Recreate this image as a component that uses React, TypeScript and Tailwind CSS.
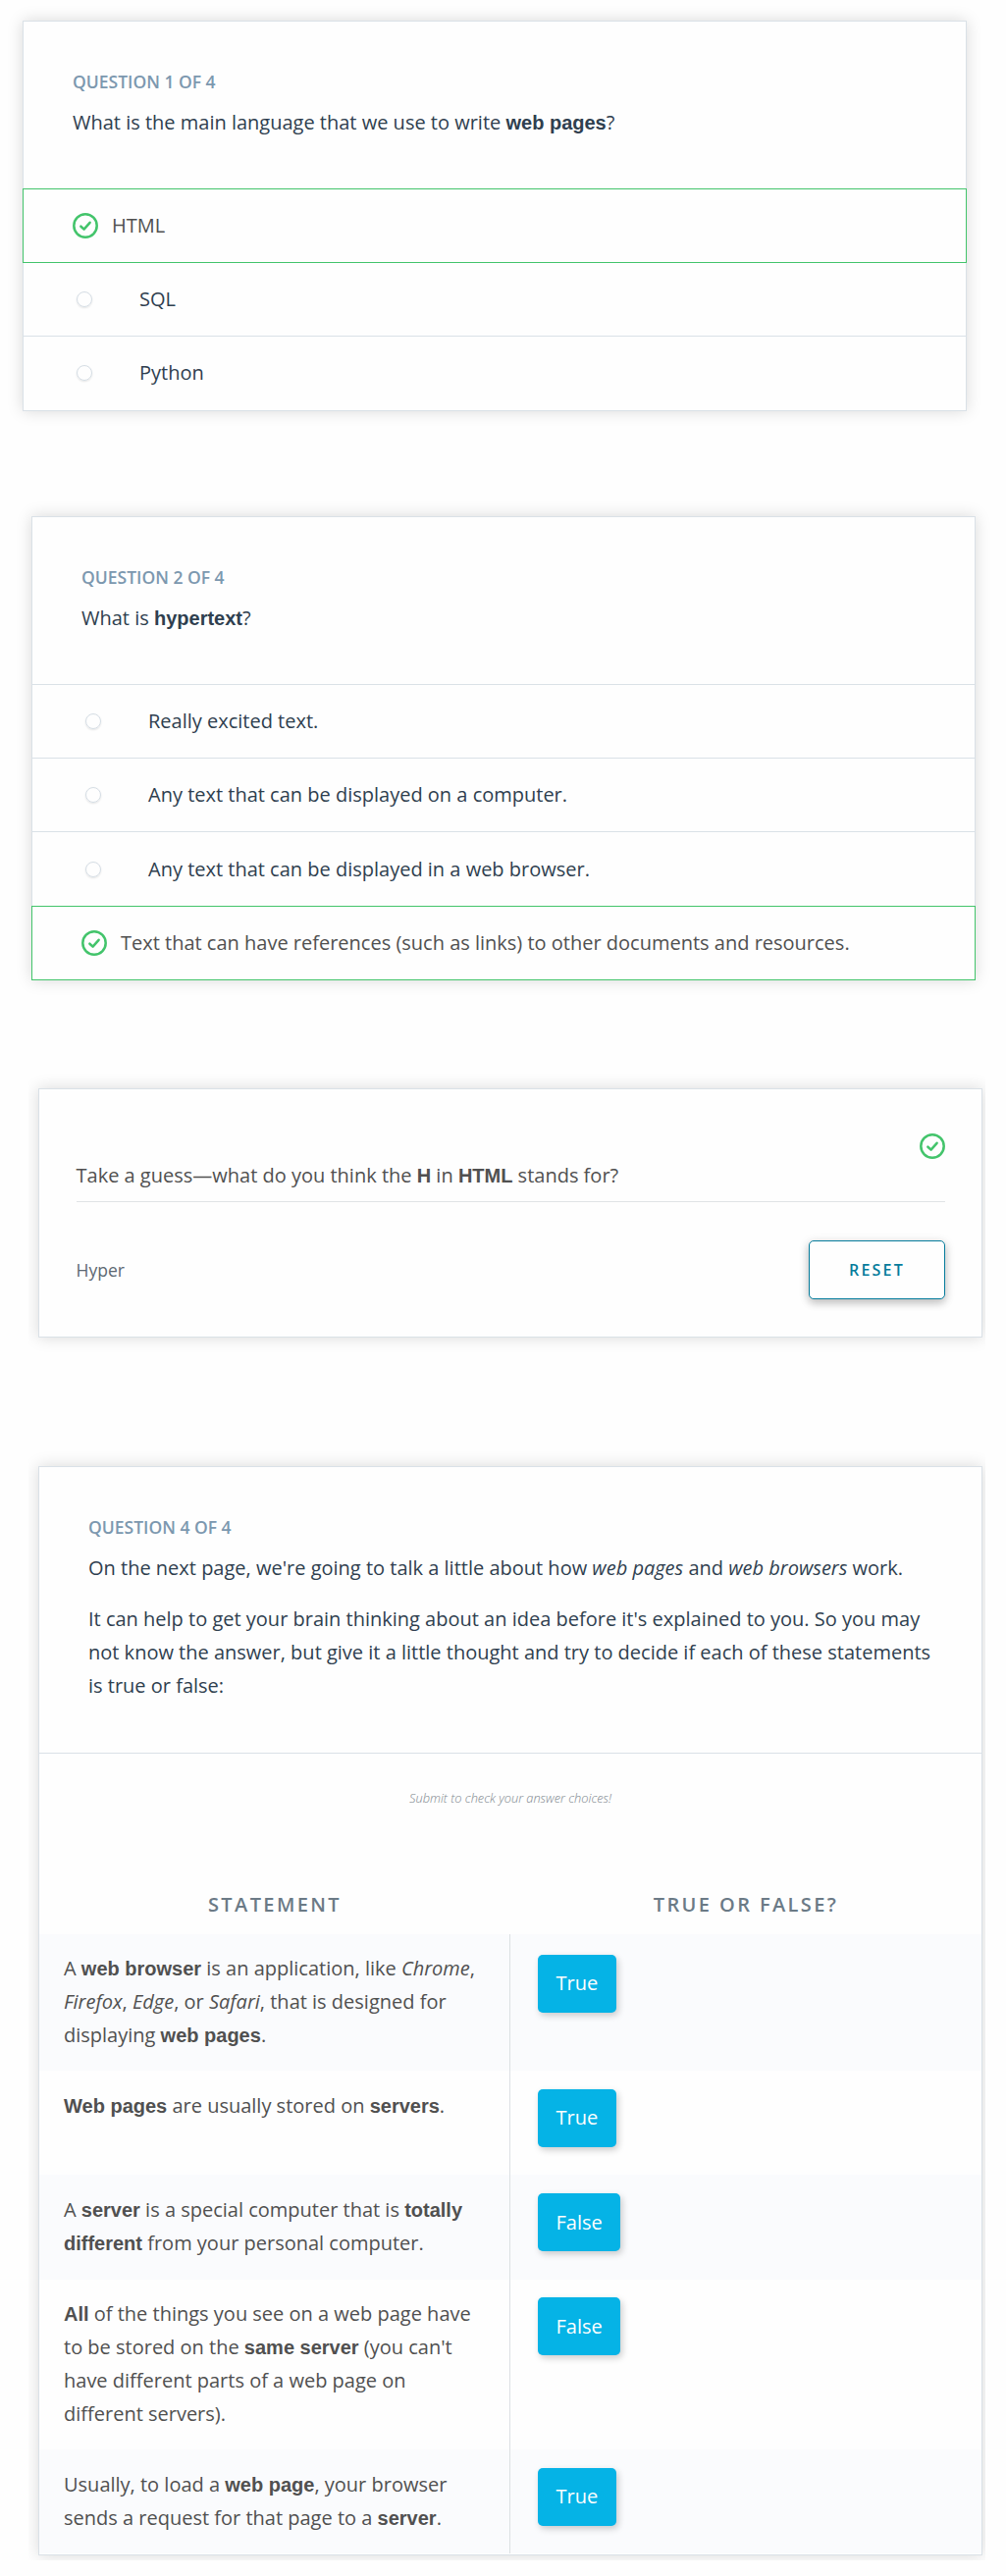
import type { ReactNode } from "react";

function CheckCircle() {
  return (
    <svg className="block h-[26px] w-[26px] shrink-0" viewBox="0 0 26 26" fill="none">
      <circle cx="13" cy="13" r="11.7" stroke="#43c46b" strokeWidth="2.5" />
      <path d="M8.4 13.7 11.6 16.6 17.6 9.8" stroke="#43c46b" strokeWidth="2.5" strokeLinecap="round" strokeLinejoin="round" />
    </svg>
  );
}

function B({ children }: { children: ReactNode }) {
  return <strong className="font-['Liberation_Sans',sans-serif] font-bold leading-none">{children}</strong>;
}

function Card({ className, children }: { className: string; children: ReactNode }) {
  return (
    <section className={`w-[962px] border border-[#dae1e7] bg-[#fefefe] shadow-[0_0_15px_rgba(0,0,0,0.15)] ${className}`}>
      {children}
    </section>
  );
}

function Header({ label, children, className }: { label: string; children: ReactNode; className: string }) {
  return (
    <header className={`px-[50px] pt-[49px] text-[#2f3f4f] ${className}`}>
      <h2 className="mb-[13px] text-[17.5px] leading-6 font-semibold text-[#7c98af]">{label}</h2>
      {children}
    </header>
  );
}

function Correct({ children }: { children: ReactNode }) {
  return (
    <div className="-mx-px flex h-[76px] items-center gap-3.5 border border-[#43c46b] px-[50px] text-[#505050]">
      <CheckCircle />
      <span>{children}</span>
    </div>
  );
}

function Option({ children, className }: { children: ReactNode; className: string }) {
  return (
    <div className={`flex items-center pl-[54px] text-[#2f3f4f] ${className}`}>
      <span className="mr-12 h-4 w-4 shrink-0 rounded-full border border-[#d5dde4] shadow-[0_1px_2px_rgba(0,0,0,0.1)]" />
      <span>{children}</span>
    </div>
  );
}

const rows: { text: ReactNode; answer: string; row: string; statement: string; cell: string; button: string }[] = [
  {
    text: (
      <>
        A <B>web browser</B> is an application, like <em>Chrome</em>,<br />
        <em>Firefox</em>, <em>Edge</em>, or <em>Safari</em>, that is designed for
        <br />
        displaying <B>web pages</B>.
      </>
    ),
    answer: "True",
    row: "h-[139px] bg-[#fafbfd]",
    statement: "pt-[18px]",
    cell: "pt-[21px]",
    button: "pb-px",
  },
  {
    text: (
      <>
        <B>Web pages</B> are usually stored on <B>servers</B>.
      </>
    ),
    answer: "True",
    row: "h-[106px]",
    statement: "pt-[19px]",
    cell: "pt-[19px]",
    button: "pb-px",
  },
  {
    text: (
      <>
        A <B>server</B> is a special computer that is <B>totally</B>
        <br />
        <B>different</B> from your personal computer.
      </>
    ),
    answer: "False",
    row: "h-[107px] bg-[#fafbfd]",
    statement: "pt-[19px]",
    cell: "pt-[19px]",
    button: "pt-px",
  },
  {
    text: (
      <>
        <B>All</B> of the things you see on a web page have
        <br />
        to be stored on the <B>same server</B> (you can't
        <br />
        have different parts of a web page on
        <br />
        different servers).
      </>
    ),
    answer: "False",
    row: "h-[173px]",
    statement: "pt-[18px]",
    cell: "pt-[18px]",
    button: "pt-px",
  },
  {
    text: (
      <>
        Usually, to load a <B>web page</B>, your browser
        <br />
        sends a request for that page to a <B>server</B>.
      </>
    ),
    answer: "True",
    row: "h-[106px] bg-[#fafbfd]",
    statement: "pt-[19px]",
    cell: "pt-[19px]",
    button: "pb-px",
  },
];

export default function App() {
  return (
    <main className="h-[2625px] w-[1025px] overflow-hidden bg-[#fefefe] pt-[21px] font-['Open_Sans',sans-serif] text-[20px] leading-[34px] whitespace-nowrap">
      <Card className="ml-[23px] h-[398px]">
        <Header label="QUESTION 1 OF 4" className="h-[170px]">
          <p>
            What is the main language that we use to write <B>web pages</B>?
          </p>
        </Header>
        <Correct>HTML</Correct>
        <Option className="h-[75px] border-b border-[#dae1e7]">SQL</Option>
        <Option className="h-[74px]">Python</Option>
      </Card>

      <Card className="mt-[107px] ml-8 h-[473px]">
        <Header label="QUESTION 2 OF 4" className="h-[170px]">
          <p>
            What is <B>hypertext</B>?
          </p>
        </Header>
        <Option className="h-[75px] border-t border-[#dae1e7]">Really excited text.</Option>
        <Option className="h-[75px] border-t border-[#dae1e7]">Any text that can be displayed on a computer.</Option>
        <Option className="h-[76px] border-t border-[#dae1e7]">Any text that can be displayed in a web browser.</Option>
        <Correct>Text that can have references (such as links) to other documents and resources.</Correct>
      </Card>

      <Card className="mt-[110px] ml-[39px] h-[254px] pt-[45px] pr-[37px] pl-[37.5px] [clip-path:inset(-20px_-3px_-20px_-10px)]">
        <div className="flex justify-end">
          <CheckCircle />
        </div>
        <p className="h-11 border-b border-[#e0e3e5] text-[#505050]">
          Take a guess—what do you think the <B>H</B> in <B>HTML</B> stands for?
        </p>
        <div className="mt-[39px] flex items-center justify-between">
          <span className="text-[17.5px] text-[#5d6872]">Hyper</span>
          <button className="h-[60px] w-[139px] rounded-[5px] border border-[#057c9c] bg-[#fefefe] text-[16px] font-semibold tracking-[2.2px] text-[#057c9c] shadow-[0_4px_8px_rgba(0,0,0,0.18),0_2px_12px_rgba(0,0,0,0.12)]">
            RESET
          </button>
        </div>
      </Card>

      <Card className="mt-[131px] ml-[39px] h-[1110px] [clip-path:inset(-20px_-3px_-5px_-10px)]">
        <Header label="QUESTION 4 OF 4" className="h-[292px] border-b border-[#dae1e7]">
          <p className="mb-[18px]">
            On the next page, we're going to talk a little about how <em>web pages</em> and <em>web browsers</em> work.
          </p>
          <p>
            It can help to get your brain thinking about an idea before it's explained to you. So you may
            <br />
            not know the answer, but give it a little thought and try to decide if each of these statements
            <br />
            is true or false:
          </p>
        </Header>
        <p className="h-[128px] pt-7 text-center text-[12.8px] font-light text-[#7d868d] italic">
          Submit to check your answer choices!
        </p>
        <div className="grid h-14 grid-cols-2 pt-[9px] text-center font-semibold tracking-[2.4px] text-[#6b7a86]">
          <span>STATEMENT</span>
          <span>TRUE OR FALSE?</span>
        </div>
        {rows.map((r, i) => (
          <div key={i} className={`flex text-[#505050] ${r.row}`}>
            <div className={`w-[480px] border-r border-[#dce0e3] pl-[25px] ${r.statement}`}>{r.text}</div>
            <div className={`pl-7 ${r.cell}`}>
              <span
                className={`flex h-[59px] items-center rounded-[5px] bg-[#05b3e6] px-[18.5px] text-[#fefefe] shadow-[2px_3px_7px_rgba(0,0,0,0.2)] ${r.button}`}
              >
                {r.answer}
              </span>
            </div>
          </div>
        ))}
      </Card>
    </main>
  );
}
